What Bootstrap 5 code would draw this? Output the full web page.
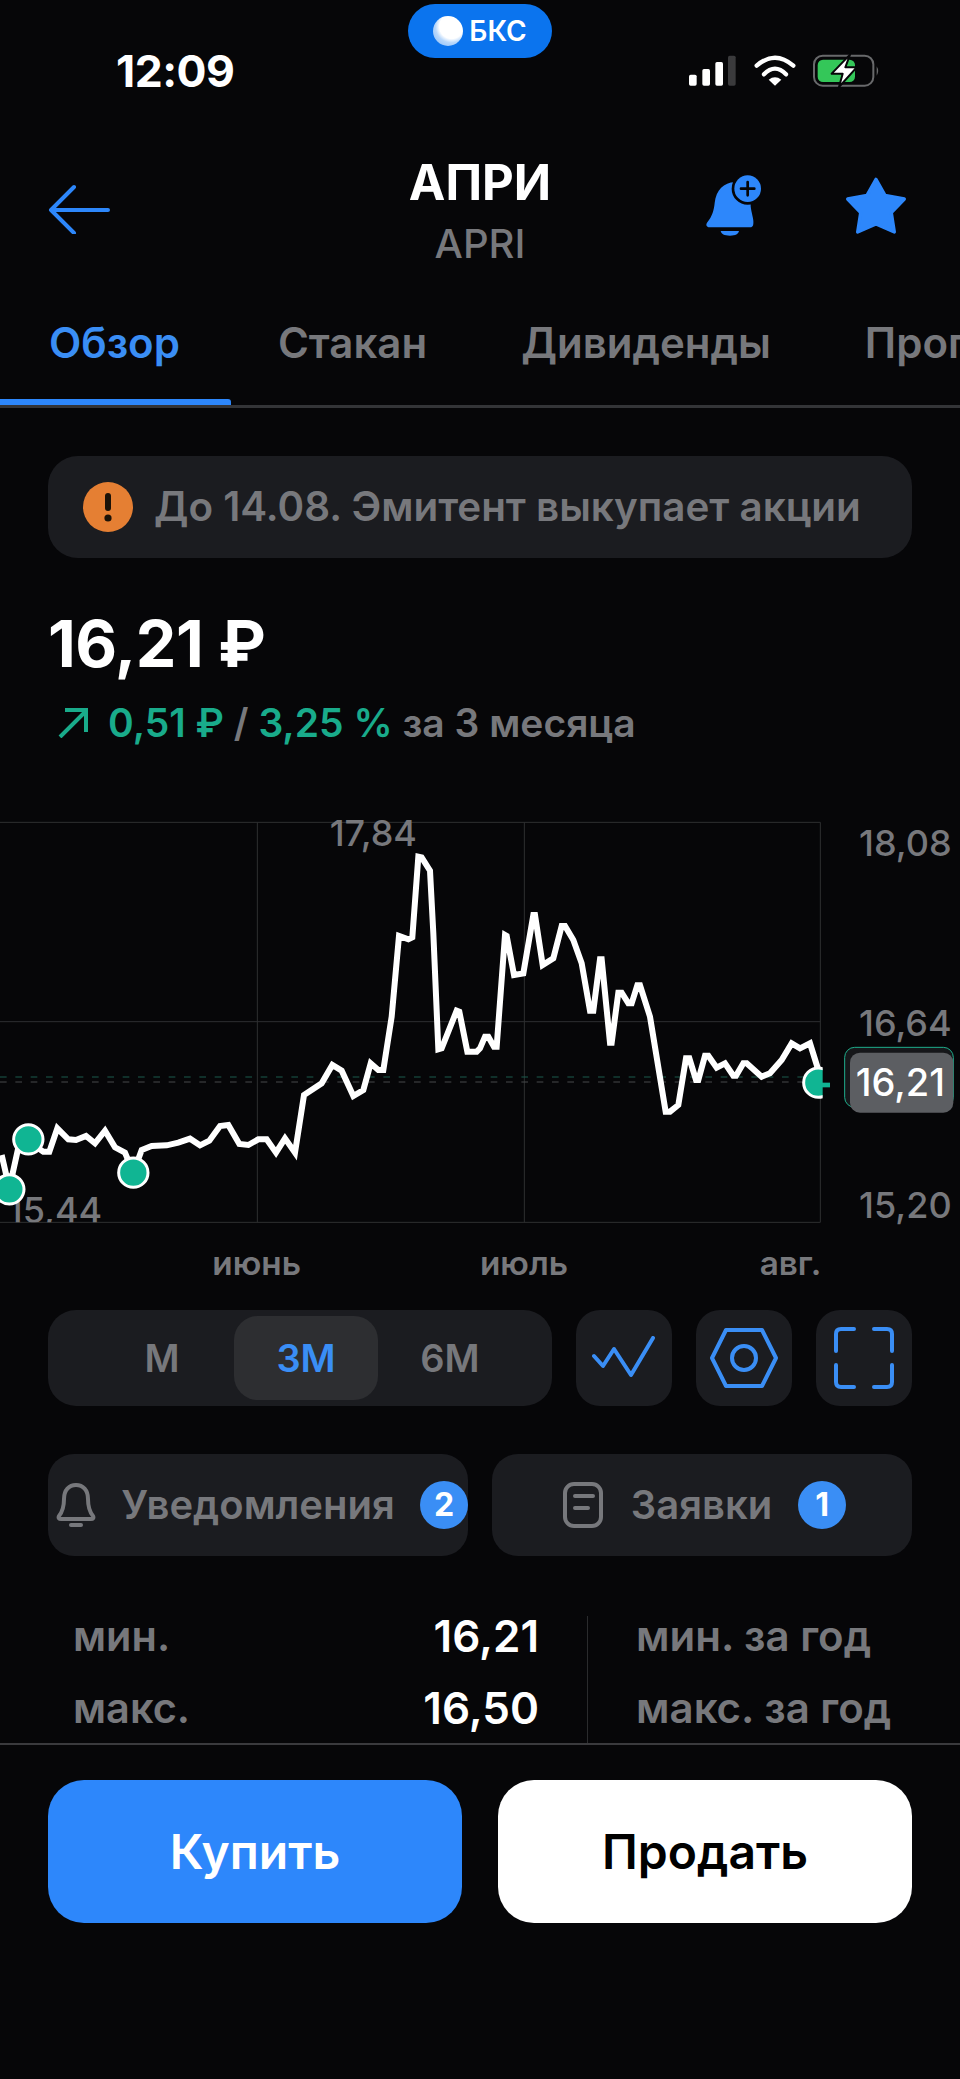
<!DOCTYPE html>
<html lang="ru">
<head>
    <meta charset="UTF-8">
    <meta name="viewport" content="width=device-width, initial-scale=1.0">
    <title>АПРИ</title>
    <link href="https://cdn.jsdelivr.net/npm/bootstrap@5.3.0/dist/css/bootstrap.min.css" rel="stylesheet">
    <style>
        html, body {
            background-color: #060608;
        }
        body {
            width: 960px;
            height: 2079px;
            overflow: hidden;
            position: relative;
            font-family: Inter, "Liberation Sans", sans-serif;
            color: #77787c;
        }
        .scr-pill {
            position: absolute;
            top: 4px;
            left: 408px;
            width: 144px;
            height: 54px;
            border-radius: 27px;
            background: #0b74ee;
            color: #fff;
            font-size: 28px;
            font-weight: 600;
            gap: 6px;
        }
        .scr-ball {
            width: 30px;
            height: 30px;
            border-radius: 50%;
            background: radial-gradient(circle at 62% 35%, #fff 0 45%, #b9d8fb 60%, #7fb6f6 100%);
        }
        .scr-status {
            height: 120px;
            padding: 50px 79px 0 116px;
        }
        .scr-status svg {
            margin-top: 4px;
        }
        .scr-time {
            color: #fff;
            font-size: 44.5px;
            font-weight: 700;
            line-height: 42px;
            letter-spacing: -.5px;
        }
        .scr-head {
            height: 105px;
            margin-top: 40px;
            padding: 0 52px 0 48px;
        }
        .scr-title {
            color: #fff;
            font-size: 49px;
            font-weight: 700;
            line-height: 46px;
        }
        .scr-sub {
            font-size: 40px;
            font-weight: 500;
            line-height: 44px;
            margin-top: 16px;
        }
        .scr-bell {
            margin-top: 13px;
        }
        .scr-star {
            margin: 16px 0 0 80px;
        }
        .scr-tabs {
            height: 143px;
            border-bottom: 3px solid #333437;
            padding-top: 30px;
        }
        .scr-tabs .nav-link {
            position: relative;
            height: 110px;
            padding: 24px 47px 0;
            color: #77787c;
            font-size: 42px;
            font-weight: 600;
            line-height: 48px;
            white-space: nowrap;
        }
        .scr-tabs .nav-link.active {
            padding: 24px 51px 0 49px;
            color: #3a8ef5;
        }
        .scr-tabs .nav-link.active::after {
            content: "";
            position: absolute;
            left: 0;
            right: 0;
            bottom: 0;
            height: 6px;
            background: #2d87fb;
            border-radius: 0 3px 0 0;
        }
        .scr-alert {
            height: 102px;
            margin: 48px 48px 0;
            padding-left: 35px;
            gap: 21px;
            background: #1b1c20;
            border-radius: 30px;
            font-size: 40.4px;
            font-weight: 600;
            white-space: nowrap;
        }
        .scr-price {
            margin: 52px 48px 0;
            color: #fff;
            font-size: 64.5px;
            font-weight: 700;
            line-height: 68px;
            letter-spacing: -.5px;
        }
        .scr-change {
            margin: 23px 48px 0 10px;
            height: 44px;
            font-size: 39px;
            font-weight: 600;
            line-height: 44px;
            white-space: nowrap;
        }
        .scr-arrow {
            margin-right: 20px;
        }
        .scr-up {
            color: #19ab8b;
        }
        .scr-chart {
            display: block;
            margin-top: 55px;
            font-family: Inter, "Liberation Sans", sans-serif;
        }
        .scr-tools {
            margin: 20px 48px 0;
            height: 96px;
        }
        .scr-seg {
            width: 504px;
            padding: 6px 30px 6px 42px;
            background: #1b1c20;
            border-radius: 28px;
            font-size: 38px;
            font-weight: 600;
        }
        .scr-seg span {
            flex: 1 1 0;
            border-radius: 24px;
        }
        .scr-seg .scr-on {
            background: #2d2e31;
            color: #3a8ef5;
        }
        .scr-tool {
            width: 96px;
            background: #1b1c20;
            border-radius: 24px;
        }
        .scr-links {
            margin: 48px 48px 0;
            height: 102px;
        }
        .scr-link {
            width: 420px;
            background: #1b1c20;
            border-radius: 26px;
            font-size: 40px;
            font-weight: 600;
        }
        .scr-orders {
            padding-left: 5px;
        }
        .scr-orders svg {
            margin-right: 28px;
        }
        .scr-orders .scr-count {
            margin-left: 26px;
        }
        .scr-count {
            width: 48px;
            height: 48px;
            border-radius: 50%;
            background: #3a8ef5;
            color: #fff;
            font-size: 32px;
            font-weight: 700;
        }
        .scr-stats {
            height: 129px;
            margin-top: 60px;
            border-bottom: 2px solid #3a3a3d;
            font-size: 41.5px;
            font-weight: 600;
            line-height: 50px;
            white-space: nowrap;
        }
        .scr-left {
            width: 588px;
            padding: 0 48px 0 73px;
            border-right: 1px solid #2a2b2d;
        }
        .scr-right {
            padding-left: 48px;
            font-size: 42px;
        }
        .scr-line {
            margin-bottom: 22px;
        }
        .scr-line:first-child {
            margin-top: -5px;
        }
        .scr-val {
            color: #fff;
            font-size: 44px;
        }
        .scr-actions {
            margin: 35px 48px 0;
            height: 143px;
        }
        .scr-btn {
            width: 414px;
            height: 143px;
            padding: 0;
            border: 0;
            border-radius: 36px;
            font-size: 48px;
            font-weight: 600;
        }
        .scr-buy, .scr-buy:hover {
            background: #2d87fb;
            color: #fff;
        }
        .scr-sell, .scr-sell:hover {
            background: #fff;
            color: #000;
        }
    </style>
</head>
<body>
    <div class="scr-pill d-flex align-items-center justify-content-center">
        <span class="scr-ball"></span><span>БКС</span>
    </div>

    <div class="scr-status d-flex justify-content-between">
        <div class="scr-time">12:09</div>
        <svg width="192" height="34" viewBox="87 163 576 102" fill="none">
            <rect x="87" y="225" width="23" height="33" rx="5" fill="#fff"/>
            <rect x="127" y="208" width="23" height="50" rx="5" fill="#fff"/>
            <rect x="166" y="187" width="23" height="71" rx="5" fill="#fff"/>
            <rect x="204" y="168" width="23" height="90" rx="5" fill="#3a3a3c"/>
            <path d="M290 198Q345 150 400 198M312 224Q345 190 378 224" stroke="#fff" stroke-width="13" stroke-linecap="round"/>
            <path d="M345 258L326 240Q345 226 364 240Z" fill="#fff"/>
            <rect x="462" y="168" width="178" height="90" rx="26" stroke="#68696b" stroke-width="6"/>
            <path d="M650 200q9 14 0 28z" fill="#68696b"/>
            <rect x="473" y="180" width="112" height="67" rx="16" fill="#34c759"/>
            <path d="M570 165L515 222H548L537 262L590 203H556Z" fill="#fff" stroke="#060608" stroke-width="6" stroke-linejoin="round"/>
        </svg>
    </div>

    <div class="scr-head d-flex justify-content-between position-relative">
        <svg class="mt-4" width="62" height="50" viewBox="0 0 62 50" fill="none" stroke="#2d87fb" stroke-width="4" stroke-linecap="round" stroke-linejoin="round">
            <path d="M60 26H3M26 3L3 26L26 49"/>
        </svg>
        <div class="position-absolute top-0 start-0 w-100 text-center">
            <div class="scr-title">АПРИ</div>
            <div class="scr-sub">APRI</div>
        </div>
        <div class="d-flex position-relative">
            <svg class="scr-bell" width="60" height="65" viewBox="140 520 180 195" fill="#2d87fb">
                <path d="M150 668C165 650 170 630 172 610C176 572 200 548 232 548C255 548 272 560 280 580L280 620C282 640 290 660 288 672C288 680 283 683 278 683L156 683C148 683 144 676 150 668Z"/>
                <path d="M190 694H245C243 703 235 708 218 708C200 708 192 703 190 694Z"/>
                <circle cx="271" cy="567" r="48" fill="#060608"/>
                <circle cx="271" cy="567" r="40"/>
                <path d="M271 547V587M251 567H291" stroke="#060608" stroke-width="8" stroke-linecap="round"/>
            </svg>
            <svg class="scr-star" width="64" height="64" viewBox="553 536 192 192" fill="#2d87fb" stroke="#2d87fb" stroke-width="10" stroke-linejoin="round">
                <path d="M649 546L676 594L734 605L695 646L704 704L649 680L594 704L603 646L564 605L622 594Z"/>
            </svg>
        </div>
    </div>

    <ul class="scr-tabs nav flex-nowrap overflow-hidden">
        <li class="nav-item"><a class="nav-link active" href="#">Обзор</a></li>
        <li class="nav-item"><a class="nav-link" href="#">Стакан</a></li>
        <li class="nav-item"><a class="nav-link" href="#">Дивиденды</a></li>
        <li class="nav-item"><a class="nav-link" href="#">Прогнозы</a></li>
    </ul>

    <div class="scr-alert d-flex align-items-center">
        <svg width="50" height="50" viewBox="0 0 50 50">
            <circle cx="25" cy="25" r="25" fill="#e57f33"/>
            <rect x="22" y="11" width="6" height="18" rx="3" fill="#1a1208"/>
            <circle cx="25" cy="36" r="3.6" fill="#1a1208"/>
        </svg>
        <span>До 14.08. Эмитент выкупает акции</span>
    </div>

    <div class="scr-price">16,21 ₽</div>

    <div class="scr-change d-flex align-items-center">
        <svg class="scr-arrow ms-5" width="30" height="30" viewBox="0 0 30 30" fill="none" stroke="#19ab8b" stroke-width="4">
            <path d="M2 29L28 3M7 2H28V24"/>
        </svg>
        <span><span class="scr-up">0,51 ₽</span> / <span class="scr-up">3,25 %</span> за 3 месяца</span>
    </div>

    <svg class="scr-chart" width="960" height="490" viewBox="0 0 2880 1470" fill="none">
        <defs>
            <clipPath id="plotClip"><rect x="-10" y="0" width="2478" height="1267"/></clipPath>
        </defs>
        <path d="M0 67H2461M0 665H2461M0 1267H2461M772 67V1267M1573 67V1267M2461 67V1267" stroke="#2e2f31" stroke-width="3"/>
        <path d="M0 831H2461" stroke="#1a5a4c" stroke-width="3" stroke-dasharray="20 26"/>
        <path d="M0 846H2461" stroke="#47484a" stroke-width="3" stroke-dasharray="20 26"/>

        <g fill="#77787c" font-size="108" font-weight="500">
            <text x="1120" y="138" text-anchor="middle">17,84</text>
            <text x="165" y="1270" clip-path="url(#plotClip)" text-anchor="middle">15,44</text>
            <text x="2855" y="168" text-anchor="end">18,08</text>
            <text x="2855" y="707" text-anchor="end">16,64</text>
            <text x="2855" y="1253" text-anchor="end">15,20</text>
        </g>
        <g fill="#77787c" font-size="100" font-weight="600">
            <text x="770" y="1425" text-anchor="middle">июнь</text>
            <text x="1572" y="1425" text-anchor="middle">июль</text>
            <text x="2464" y="1425" text-anchor="end">авг.</text>
        </g>

        <g clip-path="url(#plotClip)">
            <polyline stroke="#fff" stroke-width="18" stroke-linejoin="miter" points="5,1065 28,1165 60,1020 115,1045 130,1055 148,1055 172,985 205,1018 228,1020 258,1008 285,1030 315,992 345,1042 375,1058 400,1118 425,1050 455,1038 500,1036 535,1028 570,1016 600,1036 628,1022 660,978 685,975 718,1032 745,1035 775,1018 800,1018 828,1058 855,1015 885,1058 912,885 965,850 997,795 1025,812 1060,888 1090,870 1112,790 1135,810 1150,810 1175,650 1197,408 1225,418 1237,412 1255,170 1265,172 1290,212 1300,400 1315,748 1325,745 1370,632 1378,635 1402,755 1430,755 1440,745 1455,710 1465,710 1482,740 1490,740 1515,405 1520,408 1542,525 1570,520 1600,345 1605,345 1628,495 1660,475 1685,378 1695,378 1720,420 1745,490 1770,632 1780,632 1800,478 1805,478 1830,728 1835,728 1855,578 1865,578 1885,610 1895,610 1912,556 1920,556 1950,650 1997,935 2010,935 2035,915 2058,775 2068,775 2088,840 2095,840 2115,767 2125,767 2150,803 2175,790 2200,827 2208,827 2230,790 2240,790 2285,830 2310,820 2345,780 2375,730 2400,745 2430,730 2455,810"/>
            <g fill="#10b593" stroke="#fff" stroke-width="9">
                <circle cx="28" cy="1168" r="44"/>
                <circle cx="85" cy="1018" r="44"/>
                <circle cx="400" cy="1118" r="44"/>
                <circle cx="2455" cy="848" r="44"/>
            </g>
        </g>
        <rect x="2466" y="848" width="24" height="14" fill="#10b593"/>

        <rect x="2534" y="742" width="326" height="180" rx="30" fill="#16171a" stroke="#1fae8c" stroke-width="3"/>
        <rect x="2550" y="758" width="310" height="180" rx="30" fill="#5c5e62"/>
        <text x="2701" y="887" fill="#fff" font-size="114" font-weight="500" text-anchor="middle">16,21</text>
    </svg>

    <div class="scr-tools d-flex justify-content-between">
        <div class="scr-seg d-flex text-center">
            <span class="d-flex align-items-center justify-content-center">М</span>
            <span class="d-flex align-items-center justify-content-center scr-on">3М</span>
            <span class="d-flex align-items-center justify-content-center">6М</span>
        </div>
        <div class="scr-tool d-flex align-items-center justify-content-center ms-auto">
            <svg width="64" height="44" viewBox="0 0 64 44" fill="none" stroke="#3a8ef5" stroke-width="4" stroke-linecap="round" stroke-linejoin="round">
                <path d="M2 20L11 30L22 13L39 39L61 2"/>
            </svg>
        </div>
        <div class="scr-tool d-flex align-items-center justify-content-center ms-4">
            <svg width="68" height="62" viewBox="0 0 68 62" fill="none" stroke="#3a8ef5" stroke-width="4" stroke-linejoin="round">
                <path d="M16 3H52L66 31L52 59H16L2 31Z"/>
                <circle cx="34" cy="31" r="12"/>
            </svg>
        </div>
        <div class="scr-tool d-flex align-items-center justify-content-center ms-4">
            <svg width="60" height="62" viewBox="0 0 60 62" fill="none" stroke="#3a8ef5" stroke-width="4" stroke-linecap="round">
                <path d="M20 2H7Q2 2 2 7V24M40 2H53Q58 2 58 7V24M20 60H7Q2 60 2 55V38M40 60H53Q58 60 58 55V38"/>
            </svg>
        </div>
    </div>

    <div class="scr-links d-flex justify-content-between gap-4">
        <div class="scr-link d-flex align-items-center justify-content-between ps-2 pe-0">
            <svg width="40" height="46" viewBox="0 0 40 46" fill="none" stroke="#77787c" stroke-width="4" stroke-linejoin="round">
                <path d="M3 34C7 29 8 25 8 17C8 8 13 3 20 3S32 8 32 17C32 25 33 29 37 34C38 36 37 37 35 37H5C3 37 2 36 3 34Z"/>
                <path d="M15 43H25" stroke-linecap="round" stroke-width="4"/>
            </svg>
            <span>Уведомления</span>
            <span class="scr-count d-flex align-items-center justify-content-center">2</span>
        </div>
        <div class="scr-link scr-orders d-flex align-items-center justify-content-center">
            <svg width="40" height="46" viewBox="0 0 40 46" fill="none" stroke="#77787c" stroke-width="4" stroke-linecap="round">
                <rect x="2" y="2" width="36" height="42" rx="9"/>
                <path d="M12 14H30M12 26H25"/>
            </svg>
            <span>Заявки</span>
            <span class="scr-count d-flex align-items-center justify-content-center">1</span>
        </div>
    </div>

    <div class="scr-stats d-flex">
        <div class="scr-left">
            <div class="scr-line d-flex justify-content-between"><span>мин.</span><span class="scr-val">16,21</span></div>
            <div class="scr-line d-flex justify-content-between"><span>макс.</span><span class="scr-val">16,50</span></div>
        </div>
        <div class="scr-right">
            <div class="scr-line">мин. за год</div>
            <div class="scr-line">макс. за год</div>
        </div>
    </div>

    <div class="scr-actions d-flex justify-content-between">
        <button type="button" class="btn scr-btn scr-buy">Купить</button>
        <button type="button" class="btn scr-btn scr-sell">Продать</button>
    </div>

    <script src="https://cdn.jsdelivr.net/npm/bootstrap@5.3.0/dist/js/bootstrap.bundle.min.js"></script>
</body>
</html>
